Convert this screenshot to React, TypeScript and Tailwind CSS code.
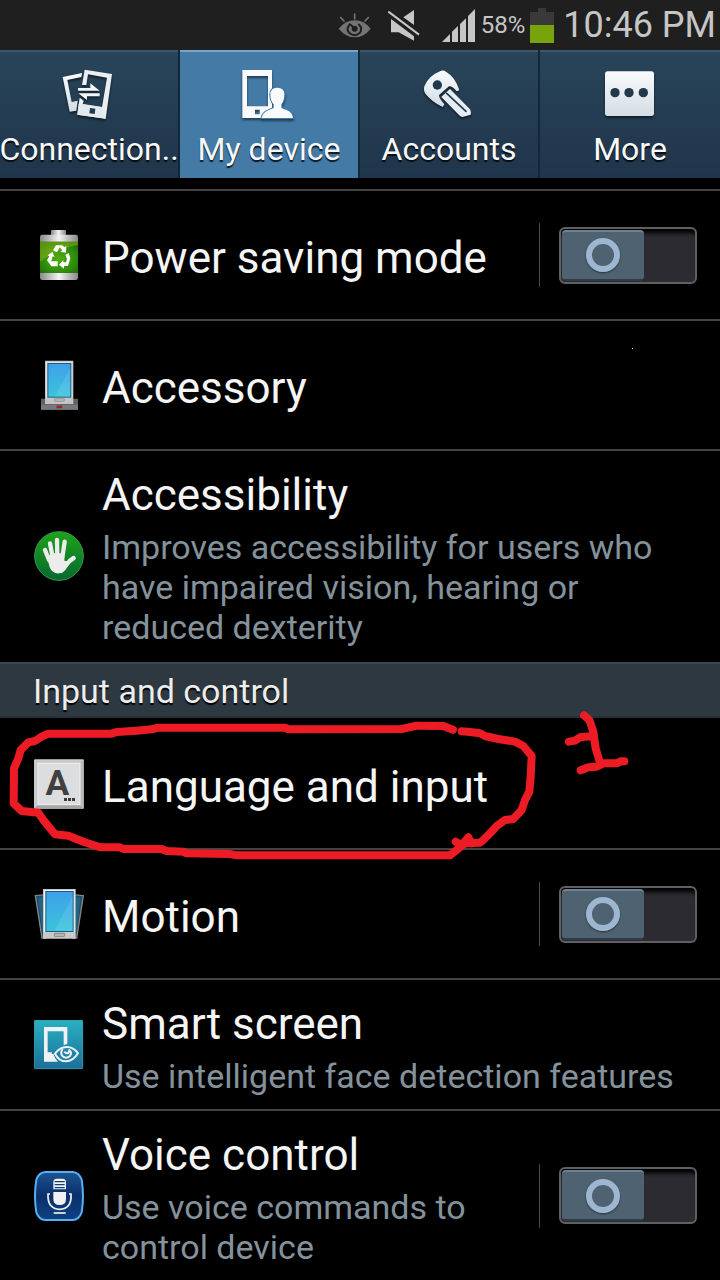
import { useState, type ReactNode } from "react";

function StatusBar() {
  return (
    <header className="flex h-[50px] items-center justify-end bg-[#1f1f1f] pr-1 text-[#c6c6c6]">
      <svg className="h-7 w-[34px]" viewBox="54 30 102 84" aria-label="Smart stay">
        <g stroke="#737373" strokeWidth="5" strokeLinecap="round" fill="none">
          <path d="M104 39V53M62 50L72 60M145 50L135 60" />
        </g>
        <path d="M56 83Q78 58 104 58Q132 58 152 83Q132 109 104 109Q78 109 56 83Z" fill="#737373" />
        <path d="M91 68Q76 84 88 96Q104 109 119 96Q130 82 115 69" fill="none" stroke="#1f1f1f" strokeWidth="6" />
        <circle cx="104" cy="83" r="9" fill="#1f1f1f" />
        <path d="M91 70L104 83" stroke="#1f1f1f" strokeWidth="6" />
      </svg>
      <svg className="ml-[15px] h-[33px] w-[33px]" viewBox="201 24 99 99" aria-label="Sound off">
        <path d="M282 27V72L250 49Z" fill="#c6c6c6" />
        <path d="M205 32L297 101" stroke="#c6c6c6" strokeWidth="6" />
        <path d="M213 54L282 106V119L236 94H213Z" fill="#c6c6c6" />
      </svg>
      <svg className="ml-[22px] h-[35px] w-[34px]" viewBox="366 24 102 105" aria-label="Signal">
        <path d="M366 126L390 102V126ZM396 95L414 78V126H396ZM420 72L438 55V126H420ZM444 48L465 27V126H444Z" fill="#c6c6c6" />
      </svg>
      <span className="ml-[5px] text-[24px] leading-7">58%</span>
      <svg className="ml-[5px] h-[35px] w-6" viewBox="627 21 72 105" aria-label="Battery">
        <path d="M651 21H675V33H699V72H627V33H651Z" fill="#393939" />
        <path d="M627 72H699V126H627Z" fill="#77a30b" />
      </svg>
      <time className="ml-[9px] text-[36px] leading-[42px]">10:46 PM</time>
    </header>
  );
}

const tabGradient = (
  <linearGradient id="tabIcon" x1="0" y1="0" x2="0" y2="1">
    <stop offset="0" stopColor="#fafbfc" />
    <stop offset="1" stopColor="#d3dde4" />
  </linearGradient>
);

const tabs: { label: string; icon: ReactNode; viewBox: string }[] = [
  {
    label: "Connection..",
    viewBox: "183 66 168 168",
    icon: (
      <>
        <defs>{tabGradient}</defs>
        <path
          fillRule="evenodd"
          fill="url(#tabIcon)"
          d="M188 96L246 84L244 96L202 105L215 171L233 167L229 197L209 200Z"
        />
        <path fill="#e9eff3" d="M254 74L336 87L317 221L232 209L239 158L251 167L248 178L306 187L321 98L264 88L259 120H246Z" />
        <path fill="#e3eaef" d="M249 177L307 186L317 221L232 209L236 176Z" />
        <path fill="#213a4e" d="M270 189L286 191L284 207L268 205Z" />
        <path fill="#f3f6f8" d="M234 129H271V115L299 137H234ZM299 145V154H261V165L235 145Z" />
      </>
    ),
  },
  {
    label: "My device",
    viewBox: "723 66 168 168",
    icon: (
      <>
        <path fillRule="evenodd" fill="#f8fafc" d="M727 75H816V219H727ZM741 93V184H804V93ZM765 194V208H779V194Z" />
        <path
          fill="#f8fafc"
          stroke="#437aa6"
          strokeWidth="6"
          paintOrder="stroke"
          d="M785 219Q788 202 805 196L821 189V178Q811 168 811 148Q811 128 832 128Q853 128 853 148Q853 168 844 178V189L861 196Q877 203 879 219Z"
        />
      </>
    ),
  },
  {
    label: "Accounts",
    viewBox: "183 66 168 168",
    icon: (
      <>
        <path
          fill="url(#tabIcon)"
          d="M240 79Q249 74 258 80Q287 97 298 136L290 139Q277 123 267 124L237 150Q236 159 253 178L248 186Q216 172 195 145Q190 135 193 124Q205 93 240 79Z"
        />
        <circle cx="232" cy="120" r="14" fill="#20394d" />
        <path fill="#e6edf1" d="M270 132L330 193Q334 199 332 209L307 216Q301 215 297 210L244 156Z" />
        <path d="M260 145L318 199" stroke="#20394d" strokeWidth="5" strokeLinecap="round" />
      </>
    ),
  },
  {
    label: "More",
    viewBox: "726 66 168 168",
    icon: (
      <>
        <rect x="735" y="79" width="147" height="134" rx="8" fill="url(#tabIcon)" />
        <g fill="#20394d">
          <circle cx="765" cy="143" r="14" />
          <circle cx="807" cy="143" r="14" />
          <circle cx="850" cy="143" r="14" />
        </g>
      </>
    ),
  },
];

function TabBar() {
  const [active, setActive] = useState("My device");
  return (
    <nav role="tablist" className="grid h-32 grid-cols-4 bg-[#132738]">
      {tabs.map((tab) => (
        <button
          key={tab.label}
          type="button"
          role="tab"
          aria-selected={active === tab.label}
          onClick={() => setActive(tab.label)}
          className={`mr-[2px] flex min-w-0 flex-col items-center gap-[7px] border-t-2 pt-[15px] text-[#f8f8f8] last:mr-0 ${
            active === tab.label
              ? "border-[#7aa5c9] bg-[#437aa6]"
              : "border-[#3d586d] bg-linear-to-b from-[#294459] to-[#1f354b]"
          }`}
        >
          <svg viewBox={tab.viewBox} className="size-14 shrink-0 drop-shadow-[0_2px_1px_rgba(0,0,0,0.5)]" aria-hidden="true">
            {tab.icon}
          </svg>
          <span className="text-[32px] leading-[38px] whitespace-nowrap [text-shadow:0_2px_1px_rgba(0,0,0,0.8)]">{tab.label}</span>
        </button>
      ))}
    </nav>
  );
}

function BatteryIcon() {
  return (
    <svg viewBox="42 45 150 150" className="size-[50px] shrink-0" aria-hidden="true">
      <defs>
        <linearGradient id="metal">
          <stop offset="0" stopColor="#888" />
          <stop offset="0.5" stopColor="#f4f4f4" />
          <stop offset="1" stopColor="#888" />
        </linearGradient>
        <radialGradient id="cell" cx="0.5" cy="0.55" r="0.7">
          <stop offset="0" stopColor="#4fae10" />
          <stop offset="0.6" stopColor="#2f8d0c" />
          <stop offset="1" stopColor="#19680d" />
        </radialGradient>
      </defs>
      <rect x="93" y="45" width="45" height="18" rx="3" fill="url(#metal)" />
      <rect x="60" y="59" width="114" height="136" rx="7" fill="url(#metal)" />
      <rect x="60" y="80" width="114" height="94" fill="url(#cell)" />
      <path d="M60 80H174V90Q120 98 60 140Z" fill="#a0b719" opacity="0.45" />
      <g fill="#fff">
        <path d="M99 106L108 91H127L133 97L139 93L138 113L121 110L127 106L119 97L111 112Z" />
        <path d="M136 119L146 114L151 130L144 153H132V161L117 149L130 135V142H138L141 132Z" />
        <path d="M83 121L97 111L104 126L98 124L94 139H113V154H94L81 136L88 124Z" />
      </g>
    </svg>
  );
}

function ScreenGradient({ id }: { id: string }) {
  return (
    <linearGradient id={id} x1="0" y1="0" x2="0" y2="1">
      <stop offset="0" stopColor="#3fa0ea" />
      <stop offset="1" stopColor="#39c5dc" />
    </linearGradient>
  );
}

function AccessoryIcon() {
  return (
    <svg viewBox="42 436 150 150" className="size-[50px] shrink-0" aria-hidden="true">
      <defs>
        <ScreenGradient id="dockScreen" />
      </defs>
      <path d="M63 552H174V585H63Z" fill="#5f6164" />
      <path d="M63 570H174V585H63Z" fill="#77797c" />
      <path d="M75 438H160V568H75Z" fill="#c4c4c4" />
      <path d="M78 441H157V548H78Z" fill="#e2e2e2" />
      <path d="M82 445H154V549H82Z" fill="#1c5c8c" />
      <path d="M85 448H151V546H85Z" fill="url(#dockScreen)" />
      <path d="M151 460V546H104Z" fill="#fff" opacity="0.1" />
      <rect x="103" y="552" width="30" height="8" rx="2" fill="#bbb" stroke="#8a8a8a" strokeWidth="2" />
      <rect x="109" y="572" width="18" height="9" fill="#555" />
      <rect x="112" y="574" width="12" height="6" fill="#d00d0d" />
    </svg>
  );
}

function HandIcon() {
  return (
    <svg viewBox="41 61 150 150" className="size-[50px] shrink-0" aria-hidden="true">
      <defs>
        <linearGradient id="hand" x1="0" y1="0" x2="0" y2="1">
          <stop offset="0" stopColor="#1da31b" />
          <stop offset="1" stopColor="#07682f" />
        </linearGradient>
      </defs>
      <circle cx="116" cy="136" r="73" fill="url(#hand)" stroke="#3c9a4c" strokeWidth="3" />
      <g stroke="#ececec" strokeLinecap="round" strokeWidth="13" fill="none">
        <path d="M74 118L86 148M89 98L97 140M110 88L111 140M133 93L126 140M160 142Q146 150 137 164" />
      </g>
      <path d="M80 138L96 128H132V150L146 152Q138 188 117 188Q96 190 88 170Z" fill="#ececec" />
    </svg>
  );
}

function LanguageIcon() {
  return (
    <svg viewBox="102 327 150 150" className="size-[50px] shrink-0" aria-hidden="true">
      <rect x="102" y="328" width="149" height="148" rx="3" fill="#c9cacb" />
      <path d="M102 476L114 464H240L251 476Z" fill="#a4a6a8" />
      <path d="M251 328V476L240 464V340Z" fill="#b9bbbd" />
      <rect x="114" y="340" width="126" height="124" fill="#dcdddf" stroke="#f0f0f0" strokeWidth="3" />
      <text x="172" y="435" textAnchor="middle" fill="#404040" className="font-['Roboto',sans-serif] text-[106px] font-bold">
        A
      </text>
      <path d="M192 444H201V453H192ZM204 444H213V453H204ZM216 444H225V453H216Z" fill="#3c3c3c" />
    </svg>
  );
}

function MotionIcon() {
  return (
    <svg viewBox="42 57 150 150" className="size-[50px] shrink-0" aria-hidden="true">
      <defs>
        <ScreenGradient id="motionScreen" />
      </defs>
      <path d="M46 77L78 74V204H66ZM190 77L158 74V204H170Z" fill="#1f5069" stroke="#858585" strokeWidth="4" />
      <path d="M54 84L75 81V184H67ZM182 84L161 81V184H169Z" fill="#236483" />
      <path d="M69 57H167V206H69Z" fill="#c9c9c9" />
      <path d="M72 60H164V186H72Z" fill="#f0f0f0" />
      <path d="M76 63H161V186H76Z" fill="#1c5c8c" />
      <path d="M79 66H158V183H79Z" fill="url(#motionScreen)" />
      <path d="M158 78V183H103Z" fill="#fff" opacity="0.1" />
      <rect x="103" y="190" width="31" height="9" rx="2" fill="#bbb" stroke="#868686" strokeWidth="3" />
    </svg>
  );
}

function SmartScreenIcon() {
  return (
    <svg viewBox="42 57 150 150" className="size-[50px] shrink-0" aria-hidden="true">
      <defs>
        <linearGradient id="smart" x1="0" y1="0" x2="0" y2="1">
          <stop offset="0" stopColor="#29b0c1" />
          <stop offset="1" stopColor="#1b6f9a" />
        </linearGradient>
      </defs>
      <rect x="43" y="58" width="145" height="145" rx="3" fill="url(#smart)" stroke="#4cbccb" strokeWidth="2" />
      <path
        d="M72 78H142V129L131 132V91H83V154H96L95 158L101 160Q104 173 114 182H72Z"
        fill="#f0f1f2"
      />
      <path d="M105 158Q120 138 140 138Q161 138 174 157Q159 181 138 181Q117 181 105 158Z" fill="none" stroke="#f0f1f2" strokeWidth="6" />
      <path d="M128 144Q120 155 127 165Q138 175 150 165Q157 155 148 148L145 156Q138 159 133 152" fill="none" stroke="#f0f1f2" strokeWidth="6" />
    </svg>
  );
}

function VoiceIcon() {
  return (
    <svg viewBox="42 60 150 150" className="size-[50px] shrink-0" aria-hidden="true">
      <defs>
        <linearGradient id="voice" x1="0" y1="0" x2="0" y2="1">
          <stop offset="0" stopColor="#1c5492" />
          <stop offset="0.5" stopColor="#0a2f6b" />
          <stop offset="1" stopColor="#0f4283" />
        </linearGradient>
      </defs>
      <path
        d="M76 63H158Q177 64 185 86Q193 136 185 184Q177 206 158 207H76Q57 206 49 184Q41 136 49 86Q57 64 76 63Z"
        fill="url(#voice)"
        stroke="#58aef0"
        strokeWidth="6"
      />
      <path d="M100 115V94Q100 83 110 83H128Q138 83 138 94V115Z" fill="#f1f1f1" />
      <path d="M104 92H134M104 101H134M104 110H134" stroke="#123f78" strokeWidth="4" />
      <path d="M100 123H138V143Q138 162 119 162Q100 162 100 143Z" fill="#f1f1f1" />
      <path d="M90 129H84Q82 174 119 175Q156 174 153 129H147" fill="none" stroke="#f1f1f1" strokeWidth="5" />
      <path d="M101 186H137" stroke="#f1f1f1" strokeWidth="5" />
    </svg>
  );
}

function Toggle({ label }: { label: string }) {
  const [on, setOn] = useState(false);
  return (
    <div className="flex h-16 shrink-0 items-center border-l border-[#4a4a4a] pl-[19px]">
      <label
        className={`flex h-[57px] w-[138px] cursor-pointer rounded-md border-2 border-[#606060] bg-[#2b2b31] p-px shadow-[inset_0_8px_4px_-4px_#000] ${
          on ? "justify-end" : "justify-start"
        }`}
      >
        <input
          type="checkbox"
          role="switch"
          aria-label={label}
          checked={on}
          onChange={(e) => setOn(e.target.checked)}
          className="sr-only"
        />
        <span className="flex w-[82px] items-center justify-center rounded-sm border-t-2 border-b-2 border-t-[#708290] border-b-[#2c3d4b] bg-[#4f6271]">
          <span className="size-[34px] rounded-full border-[6px] border-[#9db7d0] shadow-[0_1px_2px_rgba(0,0,0,0.5)]" />
        </span>
      </label>
    </div>
  );
}

interface RowProps {
  icon: ReactNode;
  title: string;
  summary?: string;
  toggle?: boolean;
  children?: ReactNode;
}

function Row({ icon, title, summary, toggle, children }: RowProps) {
  return (
    <li className="relative flex min-h-[130px] items-center border-b-2 border-[#434343] pr-[23px] last:border-transparent">
      <button type="button" className="flex min-w-0 flex-1 items-center gap-[18px] self-stretch pl-[34px] text-left">
        {icon}
        <span className="flex min-w-0 flex-1 flex-col gap-[6px] pt-[18px] pb-[13px]">
          <span className="text-[44px] leading-[52px] text-[#f5f5f5]">{title}</span>
          {summary && <span className="text-[34px] leading-10 text-[#84929b]">{summary}</span>}
        </span>
      </button>
      {toggle && <Toggle label={title} />}
      {children}
    </li>
  );
}

function Annotation() {
  return (
    <svg
      viewBox="0 210 1920 450"
      className="pointer-events-none absolute top-0 left-0 z-10 h-[150px] w-[640px] overflow-visible"
      fill="none"
      stroke="#ed1c24"
      strokeWidth="24"
      strokeLinecap="round"
      strokeLinejoin="round"
      aria-hidden="true"
    >
      <path d="M1359 239L1330 228L1250 227L1205 237L865 238L855 233H475L455 238L410 242L350 246L335 251H145L125 260L105 273L85 277L62 300L55 325L42 355L41 460L65 483L115 488L130 510L165 553L205 557L250 575L300 592H360L370 597H485L500 603L550 605L560 610L690 612L710 616H1350L1370 600L1395 580L1440 578L1450 570L1475 545L1490 528L1515 510L1540 507L1565 480L1575 450L1588 425L1592 380L1595 318L1570 288L1545 275L1495 267L1455 258L1440 250L1410 246L1385 244" />
      <path d="M1367 575L1385 585L1405 562L1415 580" />
      <path d="M1752 196L1768 210L1780 245L1787 295L1800 338M1707 275L1725 272L1740 262L1780 258M1742 361L1765 352L1790 350L1810 340H1850L1862 334H1873" />
    </svg>
  );
}

export default function App() {
  return (
    <div className="min-h-screen bg-black font-['Roboto',sans-serif]">
      <StatusBar />
      <TabBar />
      <main>
        <ul className="mt-[11px] border-t-2 border-[#434343]">
          <Row icon={<BatteryIcon />} title="Power saving mode" toggle />
          <Row icon={<AccessoryIcon />} title="Accessory">
            <span className="absolute top-[27px] right-[87px] size-px bg-white" />
          </Row>
          <Row
            icon={<HandIcon />}
            title="Accessibility"
            summary="Improves accessibility for users who have impaired vision, hearing or reduced dexterity"
          />
        </ul>
        <h2 className="flex h-14 items-center border-t-2 border-b-2 border-t-[#3a4753] border-b-[#27313a] bg-[#2e3840] px-[33px] pt-[2px] text-[34px] leading-10 text-[#ededed] [text-shadow:0_2px_1px_#000]">
          Input and control
        </h2>
        <ul className="pt-[2px]">
          <Row icon={<LanguageIcon />} title="Language and input">
            <Annotation />
          </Row>
          <Row icon={<MotionIcon />} title="Motion" toggle />
          <Row icon={<SmartScreenIcon />} title="Smart screen" summary="Use intelligent face detection features" />
          <Row icon={<VoiceIcon />} title="Voice control" summary="Use voice commands to control device" toggle />
        </ul>
      </main>
    </div>
  );
}
